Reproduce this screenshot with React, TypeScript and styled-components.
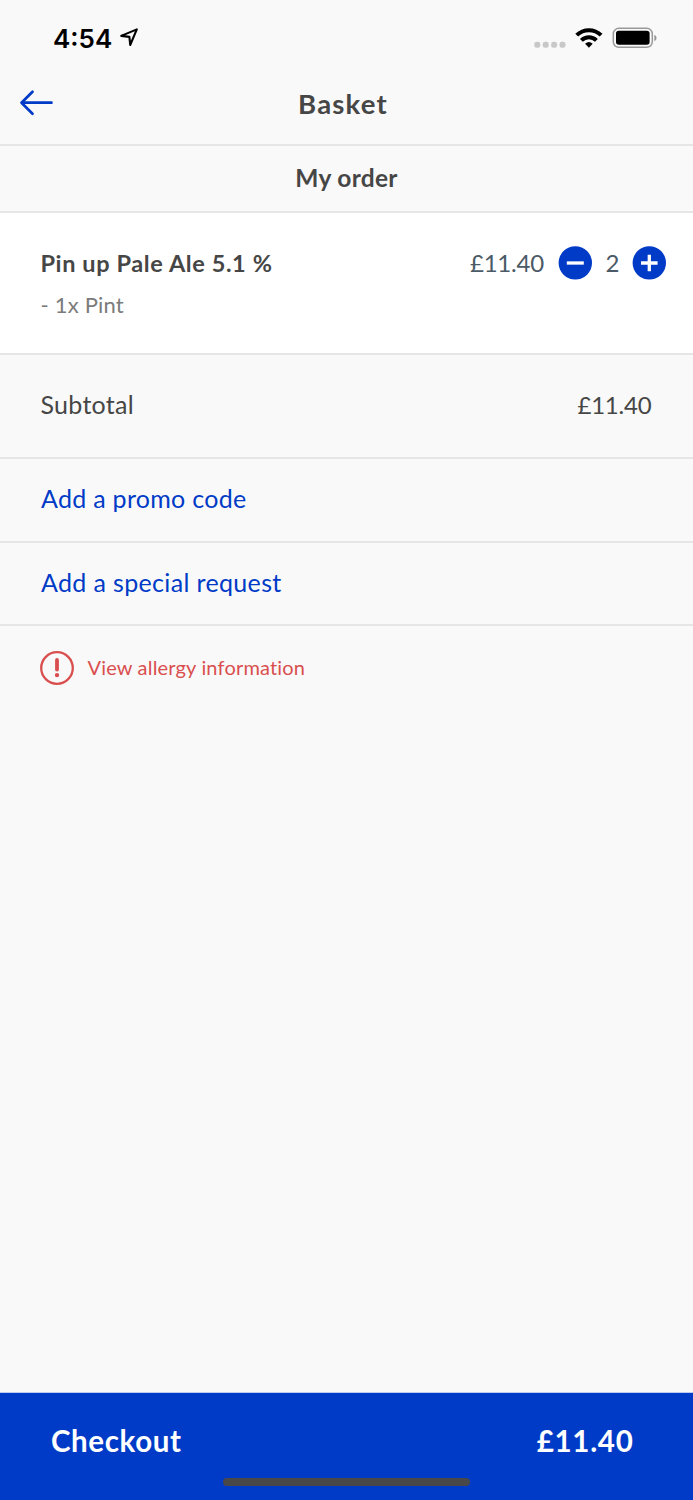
import React from 'react';
import styled, { createGlobalStyle } from 'styled-components';

const colors = {
  page: '#f9f9f9',
  card: '#ffffff',
  line: '#e6e6e6',
  ink: '#464646',
  muted: '#7b7b7b',
  slate: '#4a5a66',
  blue: '#003bc7',
  red: '#d94f4f',
};

const GlobalStyle = createGlobalStyle`
  html, body { margin: 0; padding: 0; background: ${colors.page}; }
  * { box-sizing: border-box; }
`;

const Screen = styled.div`
  display: flex;
  flex-direction: column;
  width: 100%;
  height: 1500px;
  overflow: hidden;
  background: ${colors.page};
  font-family: Lato, 'Open Sans', sans-serif;
`;

const StatusBar = styled.header`
  display: flex;
  justify-content: space-between;
  height: 76px;
  padding: 22px 36px 0 53px;
`;

const Clock = styled.div`
  display: flex;
  padding-top: 1px;
  font: 600 26px/32px Inter, sans-serif;
  color: #000;

  svg {
    margin: 4px 0 0 7px;
  }
`;

const StatusIcons = styled.div`
  display: flex;
  height: 32px;
`;

const Text = styled.span<{ $size: number; $spacing?: number; $bold?: boolean; $color?: string }>`
  display: block;
  white-space: pre;
  line-height: 32px;
  font-size: ${(p) => p.$size}px;
  font-weight: ${(p) => (p.$bold ? 700 : 400)};
  letter-spacing: ${(p) => p.$spacing ?? 0}px;
  color: ${(p) => p.$color ?? colors.ink};
`;

const NavBar = styled.nav`
  display: grid;
  grid-template-columns: 80px 1fr 80px;
  height: 70px;
  padding: 12px 7px 0 0;
  border-bottom: 2px solid ${colors.line};
  text-align: center;
`;

const BackButton = styled.button`
  width: 36px;
  height: 28px;
  margin: 1px 0 0 18px;
  padding: 0;
  border: 0;
  background: none;
  svg { display: block; }
`;

const SectionTitle = styled.h2`
  height: 67px;
  margin: 0;
  padding: 16px 0 0;
  border-bottom: 2px solid ${colors.line};
  text-align: center;
`;

const OrderItem = styled.section`
  display: flex;
  justify-content: space-between;
  height: 142px;
  padding: 33px 27px 0 40.5px;
  border-bottom: 2px solid ${colors.line};
  background: ${colors.card};
`;

const ItemName = styled.div`
  display: flex;
  flex-direction: column;
  gap: 10px;
  padding-top: 1px;
`;

const Stepper = styled.div`
  display: flex;
  height: 34px;
`;

const Quantity = styled.div`
  width: 40px;
  padding: 1px 0 0 13.5px;
`;

const RoundButton = styled.button`
  width: 34px;
  height: 34px;
  margin: 0;
  padding: 0;
  border: 0;
  background: none;
  svg { display: block; }
`;

const ItemPrice = styled.div`
  margin-right: 14px;
  padding-top: 1px;
`;

const SubtotalRow = styled.div`
  display: flex;
  justify-content: space-between;
  height: 104px;
  padding: 33px 41.5px 0 40.5px;
  border-bottom: 2px solid ${colors.line};
`;

const Amount = styled.div`
  padding-top: 1px;
`;

const ActionRow = styled.div<{ $height: number }>`
  height: ${(p) => p.$height}px;
  padding: 23px 0 0 41px;
  border-bottom: 2px solid ${colors.line};
`;

const AllergyRow = styled.div`
  display: flex;
  flex: 1;
  align-items: flex-start;
  gap: 13.5px;
  padding: 25px 0 0 40px;
  svg { display: block; }
`;

const CheckoutBar = styled.footer`
  display: flex;
  flex-direction: column;
  height: 108px;
  border-top: 1px solid #bccbf0;
  background: ${colors.blue};
`;

const CheckoutRow = styled.div`
  display: flex;
  justify-content: space-between;
  height: 85px;
  padding: 32px 59.5px 0 51px;
`;

const HomeIndicator = styled.div`
  width: 247px;
  height: 8px;
  margin: 0 auto;
  border-radius: 4px;
  background: #484848;
`;

const LocationIcon = () => (
  <svg width="20" height="21" viewBox="0 0 20 21">
    <path d="M2.2 8.9 17.8 2.4 11.2 18 10.4 9.9Z" fill="none" stroke="#000" strokeWidth="2.1" strokeLinejoin="round" />
  </svg>
);

const StatusGlyphs = () => (
  <svg width="124" height="32" viewBox="0 0 124 32">
    {[1.3, 9.7, 18.1, 26.5].map((x) => (
      <rect key={x} x={x} y="19.8" width="6" height="6" rx="2.4" fill="#c8c8c8" />
    ))}
    <g fill="none" stroke="#000" strokeWidth="4">
      <path d="M43.7 13.2A17.3 17.3 0 0 1 68.1 13.2" />
      <path d="M48.4 18.3A10.6 10.6 0 0 1 63.4 18.3" />
    </g>
    <path d="M55.9 25.8 52.1 21.8Q55.9 18.4 59.7 21.8Z" fill="#000" />
    <rect x="80.3" y="6.3" width="39" height="19" rx="5.5" fill="none" stroke="#999" strokeWidth="1.5" />
    <rect x="83" y="8.8" width="33.6" height="14" rx="2.8" fill="#000" />
    <path d="M121.3 12.8Q123.6 13.8 123.6 16T121.3 19.2Z" fill="#999" />
  </svg>
);

const BackIcon = () => (
  <svg width="36" height="28" viewBox="0 0 36 28">
    <path d="M14.5 2.8 3.5 13.7 14.5 24.8M3.5 13.7H33.5" fill="none" stroke={colors.blue} strokeWidth="2.7" strokeLinecap="round" strokeLinejoin="round" />
  </svg>
);

const StepIcon = ({ plus }: { plus?: boolean }) => (
  <svg width="34" height="34" viewBox="0 0 34 34">
    <circle cx="17.3" cy="16.9" r="16.7" fill={colors.blue} />
    <path d={plus ? 'M9 17H25.6M17.3 8.7V25.3' : 'M8.8 17H25.8'} stroke="#fff" strokeWidth="3.3" />
  </svg>
);

const AlertIcon = () => (
  <svg width="34" height="34" viewBox="0 0 34 34">
    <circle cx="17" cy="17" r="15.8" fill="none" stroke={colors.red} strokeWidth="2.3" />
    <path d="M17 9V18.6" stroke={colors.red} strokeWidth="3.8" strokeLinecap="round" />
    <circle cx="17" cy="24.1" r="2.2" fill={colors.red} />
  </svg>
);

export default function App() {
  return (
    <Screen>
      <GlobalStyle />
      <StatusBar>
        <Clock>
          4:54
          <LocationIcon />
        </Clock>
        <StatusIcons>
          <StatusGlyphs />
        </StatusIcons>
      </StatusBar>
      <NavBar>
        <BackButton aria-label="Back">
          <BackIcon />
        </BackButton>
        <Text $size={27.5} $spacing={1.2} $bold>Basket</Text>
      </NavBar>
      <SectionTitle>
        <Text $size={24.5} $spacing={0.3} $bold>My order</Text>
      </SectionTitle>
      <OrderItem>
        <ItemName>
          <Text $size={23.5} $spacing={0.6} $bold>Pin up Pale Ale 5.1 %</Text>
          <Text $size={22} $spacing={0.2} $color={colors.muted}>- 1x Pint</Text>
        </ItemName>
        <Stepper>
          <ItemPrice>
            <Text $size={24} $spacing={-0.2} $color={colors.slate}>£11.40</Text>
          </ItemPrice>
          <RoundButton aria-label="Remove one">
            <StepIcon />
          </RoundButton>
          <Quantity>
            <Text $size={24} $color={colors.slate}>2</Text>
          </Quantity>
          <RoundButton aria-label="Add one">
            <StepIcon plus />
          </RoundButton>
        </Stepper>
      </OrderItem>
      <SubtotalRow>
        <Text $size={25} $spacing={0.28}>Subtotal</Text>
        <Amount>
          <Text $size={24} $spacing={-0.2}>£11.40</Text>
        </Amount>
      </SubtotalRow>
      <ActionRow $height={84}>
        <Text $size={25} $spacing={0.29} $color={colors.blue}>Add a promo code</Text>
      </ActionRow>
      <ActionRow $height={83}>
        <Text $size={25} $spacing={0.35} $color={colors.blue}>Add a special request</Text>
      </ActionRow>
      <AllergyRow>
        <AlertIcon />
        <Text $size={20} $spacing={0.18} $color={colors.red}>View allergy information</Text>
      </AllergyRow>
      <CheckoutBar>
        <CheckoutRow>
          <Text $size={29.5} $spacing={0.61} $bold $color="#fff">Checkout</Text>
          <Text $size={29.5} $spacing={0.71} $bold $color="#fff">£11.40</Text>
        </CheckoutRow>
        <HomeIndicator />
      </CheckoutBar>
    </Screen>
  );
}
